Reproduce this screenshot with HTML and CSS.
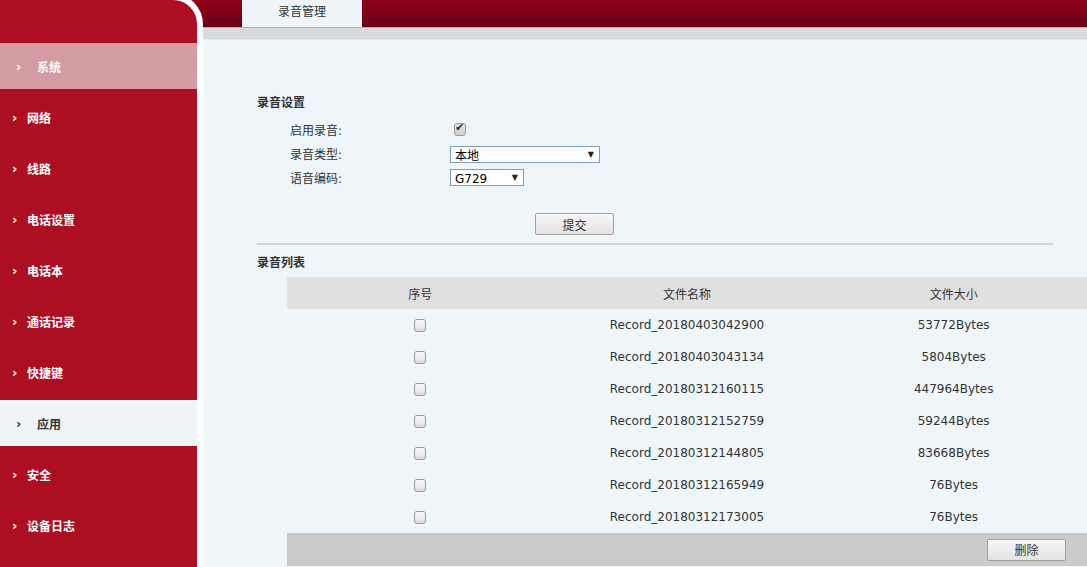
FILE: index.html
```html
<!DOCTYPE html>
<html lang="zh-CN">
<head>
    <meta charset="UTF-8">
    <title>录音管理</title>
    <link rel="stylesheet" href="styles.css">
</head>
<body>

<div class="page">
    <aside class="sidebar">
        <ul class="menu">
            <li class="item selected"><span class="arrow">›</span>系统</li>
            <li class="item"><span class="arrow">›</span>网络</li>
            <li class="item"><span class="arrow">›</span>线路</li>
            <li class="item"><span class="arrow">›</span>电话设置</li>
            <li class="item"><span class="arrow">›</span>电话本</li>
            <li class="item"><span class="arrow">›</span>通话记录</li>
            <li class="item"><span class="arrow">›</span>快捷键</li>
            <li class="item current"><span class="arrow">›</span>应用</li>
            <li class="item"><span class="arrow">›</span>安全</li>
            <li class="item"><span class="arrow">›</span>设备日志</li>
        </ul>
    </aside>

    <main class="main">
        <div class="topbar">
            <div class="tab">录音管理</div>
        </div>
        <div class="band"></div>

        <form class="content" action="javascript:;">
            <h3 class="title">录音设置</h3>
            <div class="field">
                <label class="label" for="enable">启用录音:</label>
                <input class="check checked" type="checkbox" id="enable" checked>
            </div>
            <div class="field">
                <label class="label">录音类型:</label>
                <span class="select wide">本地</span>
            </div>
            <div class="field">
                <label class="label">语音编码:</label>
                <span class="select narrow">G729</span>
            </div>
            <div class="actions">
                <button class="btn" type="submit">提交</button>
            </div>
            <hr class="line">

            <h3 class="title">录音列表</h3>
            <table class="list">
                <thead>
                <tr>
                    <th>序号</th>
                    <th>文件名称</th>
                    <th>文件大小</th>
                </tr>
                </thead>
                <tbody>
                <tr><td><input class="check" type="checkbox"></td><td>Record_20180403042900</td><td>53772Bytes</td></tr>
                <tr><td><input class="check" type="checkbox"></td><td>Record_20180403043134</td><td>5804Bytes</td></tr>
                <tr><td><input class="check" type="checkbox"></td><td>Record_20180312160115</td><td>447964Bytes</td></tr>
                <tr><td><input class="check" type="checkbox"></td><td>Record_20180312152759</td><td>59244Bytes</td></tr>
                <tr><td><input class="check" type="checkbox"></td><td>Record_20180312144805</td><td>83668Bytes</td></tr>
                <tr><td><input class="check" type="checkbox"></td><td>Record_20180312165949</td><td>76Bytes</td></tr>
                <tr><td><input class="check" type="checkbox"></td><td>Record_20180312173005</td><td>76Bytes</td></tr>
                </tbody>
                <tfoot>
                <tr>
                    <td colspan="3" class="foot"><button class="btn" type="button">删除</button></td>
                </tr>
                </tfoot>
            </table>
        </form>
    </main>
</div>

</body>
</html>
```

FILE: styles.css
```css
html, body {
    margin: 0;
    height: 100%;
    overflow: hidden;
}

body, input, button, table {
    font-family: "DejaVu Sans", "Noto Sans CJK SC", sans-serif;
    font-size: 12px;
    color: #333;
}

.page {
    display: flex;
    min-height: 100vh;
    background: linear-gradient(#900019, #6a0017) top left / 100% 28px no-repeat, #eef6f9;
}

/* left menu */
.sidebar {
    flex: 0 0 197px;
    margin-top: -6px;
    background: #ad0f22;
    border-top: 6px solid #fff;
    border-right: 6px solid #fff;
    border-top-right-radius: 30px;
}

.menu {
    list-style: none;
    margin: 0;
    padding: 43px 0 0;
}

.item {
    display: flex;
    align-items: center;
    height: 46px;
    margin-bottom: 5px;
    padding-left: 12px;
    color: #fff;
    font-weight: bold;
}

.arrow {
    width: 15px;
    font-size: 13px;
    font-weight: bold;
}

.item.selected,
.item.current {
    padding-left: 16px;
}

.item.selected .arrow,
.item.current .arrow {
    width: 21px;
}

.item.selected {
    background: #d49ba2;
}

.item.current {
    background: #eef4f8;
    color: #333;
}

/* right side */
.main {
    flex: 1;
    min-width: 0;
}

.topbar {
    height: 27px;
    padding-left: 39px;
}

.tab {
    width: 120px;
    height: 27px;
    line-height: 24px;
    text-align: center;
    background: #eef5f8;
}

.band {
    height: 11px;
    border-top: 1px solid #c9a6ac;
    background: #d8dbdd;
    border-bottom: 1px solid #e6ecef;
}

.content {
    margin: 0;
    padding: 55px 34px 0 54px;
}

.title {
    margin: 0 0 6px;
    font-size: 12px;
    line-height: 16px;
    font-weight: bold;
}

.field {
    display: flex;
    align-items: center;
    height: 24px;
}

.label {
    width: 193px;
    padding-left: 33px;
    box-sizing: border-box;
}

.check {
    appearance: none;
    -webkit-appearance: none;
    width: 12px;
    height: 13px;
    margin: 0;
    border: 1px solid #9a9a9a;
    border-radius: 3px;
    background: linear-gradient(#fbfbfb, #dedede);
    box-sizing: border-box;
    position: relative;
}

.check.checked {
    margin-left: 4px;
    background: linear-gradient(#e6e6e6, #cfcfcf);
}

.check:checked::after {
    content: "✔";
    position: absolute;
    left: 0;
    top: -3px;
    font-size: 11px;
    color: #333;
}

.select {
    position: relative;
    display: block;
    height: 17px;
    line-height: 18px;
    padding-left: 4px;
    border: 1px solid #7f9db9;
    background: #fff;
    box-sizing: border-box;
    color: #000;
}

.select::after {
    content: "▼";
    position: absolute;
    right: 5px;
    top: -1px;
    font-size: 8px;
    color: #222;
}

.select.wide {
    width: 150px;
    margin-top: 2px;
}

.select.narrow {
    width: 74px;
}

.actions {
    padding: 24px 0 0 278px;
}

.btn {
    width: 79px;
    height: 22px;
    padding: 0;
    border: 1px solid #a0a0a0;
    border-radius: 2px;
    background: linear-gradient(#f7f7f7, #e3e3e3);
    color: #333;
}

.line {
    margin: 8px 0 10px;
    border: 0;
    height: 2px;
    background: #d2d4d5;
}

.list {
    width: 800px;
    margin: 1px 0 0 30px;
    border-collapse: collapse;
    table-layout: fixed;
    text-align: center;
}

.list th {
    height: 32px;
    padding: 0;
    background: #e0e0e0;
    font-weight: normal;
}

.list td {
    height: 32px;
    padding: 0;
}

.list td .check {
    vertical-align: middle;
}

.list .foot {
    height: 33px;
    background: #cbcbcb;
    text-align: right;
    padding-right: 21px;
}
```
